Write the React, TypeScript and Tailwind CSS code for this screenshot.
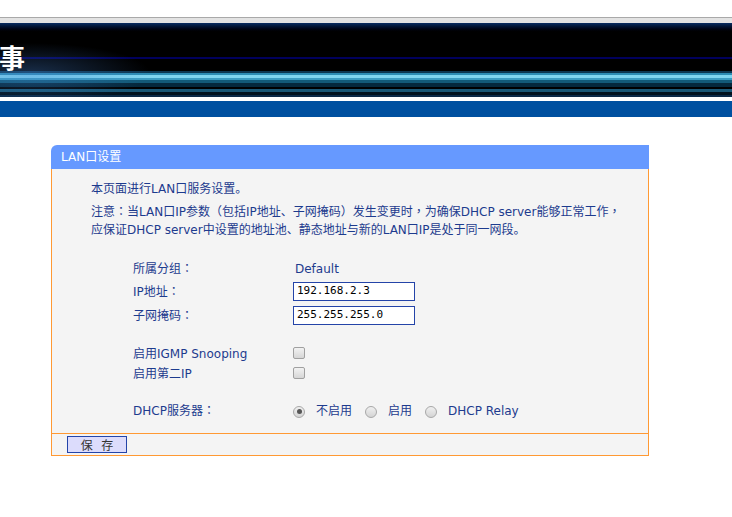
import React from "react";

const FONT = '"DejaVu Sans", "Noto Sans CJK SC", sans-serif';

function T({ s }: { s: string }) {
  const parts = s.split(/([：，])/);
  return (
    <>
      {parts.map((p, i) =>
        p === "：" || p === "，" ? (
          <span key={i} className="leading-none" style={{ fontFamily: '"Noto Sans CJK TC", sans-serif' }}>
            {p}
          </span>
        ) : (
          <React.Fragment key={i}>{p}</React.Fragment>
        )
      )}
    </>
  );
}

function Checkbox() {
  return (
    <span className="inline-block w-[12px] h-[12px] rounded-[2px] border border-[#a0a0a0] bg-gradient-to-b from-[#f2f2f2] to-[#d6d6d6] -mt-[3px]" />
  );
}

function Radio({ checked }: { checked?: boolean }) {
  return (
    <span className="relative mt-[1px] inline-flex items-center justify-center w-[12px] h-[12px] rounded-full border border-[#a8a8a8] bg-gradient-to-b from-[#f0f0f0] to-[#d4d4d4]">
      {checked && <span className="w-[5px] h-[5px] rounded-full bg-[#555]" />}
    </span>
  );
}

export default function App() {
  return (
    <div className="w-[732px] min-h-[517px] bg-white text-[12px] text-[#1d3b8e]" style={{ fontFamily: FONT }}>
      <div className="h-[17px] bg-white" />
      <div className="h-px bg-[#a9a9a9]" />
      <div className="h-[5px] bg-[#e3e3e3]" />
      {/* banner */}
      <div className="relative h-[74px] overflow-hidden bg-black">
        <div className="flex flex-col">
          <div className="h-[10px] bg-gradient-to-b from-[#0a2d63] to-[#000000]" />
          <div className="h-[24px] bg-black" />
          <div className="h-[2px] bg-[#00005c]" />
          <div className="h-[12px] bg-black" />
          <div className="h-[2px] bg-[#0c3650]" />
          <div className="h-[2px] bg-[#2d8db4]" />
          <div className="h-[3px] bg-[#7fd5ef]" />
          <div className="h-[2px] bg-[#3c9dc2]" />
          <div className="h-[3px] bg-[#135a78]" />
          <div className="h-[4px] bg-[#05283c]" />
          <div className="h-[2px] bg-[#000]" />
          <div className="h-[3px] bg-[#1a5876]" />
          <div className="h-[3px] bg-[#02131f]" />
          <div className="h-[2px] bg-[#0b2a48]" />
        </div>
        <div className="absolute inset-0 bg-[radial-gradient(ellipse_120px_30px_at_30px_50px,rgba(70,130,210,0.35),transparent)]" />
        <div
          className="absolute left-[-1px] top-[21px] text-[26px] font-bold leading-none text-white"
          style={{ fontFamily: '"Noto Sans CJK SC", sans-serif' }}
        >
          事
        </div>
      </div>
      <div className="h-[4px] bg-white" />
      <div className="h-[16px] bg-[#0050a0]" />

      {/* panel */}
      <div className="mt-[28px] ml-[51px] w-[598px]">
        <div className="h-[24px] bg-[#6699ff] rounded-tl-[6px] pl-[10px] flex items-center text-white">
          LAN口设置
        </div>
        <div className="border-x border-[#ff9933] bg-[#f4f4f4] pt-[11px] pb-[12px] pl-[39px]">
          <div className="leading-[18px]">本页面进行LAN口服务设置。</div>
          <div className="mt-[5px] leading-[18px]">
            <T s="注意：当LAN口IP参数（包括IP地址、子网掩码）发生变更时，为确保DHCP server能够正常工作，" />
            <br />
            <T s="应保证DHCP server中设置的地址池、静态地址与新的LAN口IP是处于同一网段。" />
          </div>
          <div className="mt-[19px] ml-[42px] flex flex-col">
            <div className="h-[22px] flex items-center">
              <div className="w-[160px]"><T s="所属分组：" /></div>
              <div className="pl-[2px]">Default</div>
            </div>
            <div className="h-[24px] flex items-center">
              <div className="w-[160px]"><T s="IP地址：" /></div>
              <div className="-mt-[2px] w-[122px] h-[19px] border border-[#2444a8] bg-white text-black pl-[3px] flex items-center text-[11px]" style={{ fontFamily: '"DejaVu Sans Mono", monospace' }}>
                192.168.2.3
              </div>
            </div>
            <div className="h-[24px] flex items-center">
              <div className="w-[160px]"><T s="子网掩码：" /></div>
              <div className="-mt-[2px] w-[122px] h-[19px] border border-[#2444a8] bg-white text-black pl-[3px] flex items-center text-[11px]" style={{ fontFamily: '"DejaVu Sans Mono", monospace' }}>
                255.255.255.0
              </div>
            </div>
            <div className="h-[16px]" />
            <div className="h-[20px] flex items-center">
              <div className="w-[160px]">启用IGMP Snooping</div>
              <Checkbox />
            </div>
            <div className="h-[20px] flex items-center">
              <div className="w-[160px]">启用第二IP</div>
              <Checkbox />
            </div>
            <div className="h-[16px]" />
            <div className="h-[22px] flex items-center">
              <div className="w-[160px]"><T s="DHCP服务器：" /></div>
              <Radio checked />
              <span className="ml-[11px]">不启用</span>
              <span className="ml-[13px] flex"><Radio /></span>
              <span className="ml-[11px]">启用</span>
              <span className="ml-[13px] flex"><Radio /></span>
              <span className="ml-[11px]">DHCP Relay</span>
            </div>
          </div>
        </div>
        <div className="border border-[#ff9933] bg-[#f4f4f4] h-[23px] pl-[15px] pt-[2px] -mt-[1px]">
          <button className="w-[60px] h-[17px] border border-[#2444a8] bg-[#dcdcfc] text-[#333] text-[12px] leading-none flex items-center justify-center tracking-[3px]" style={{ fontFamily: '"Noto Sans CJK SC", sans-serif' }}>
            <span className="pl-[3px]">保&nbsp;存</span>
          </button>
        </div>
      </div>
    </div>
  );
}
